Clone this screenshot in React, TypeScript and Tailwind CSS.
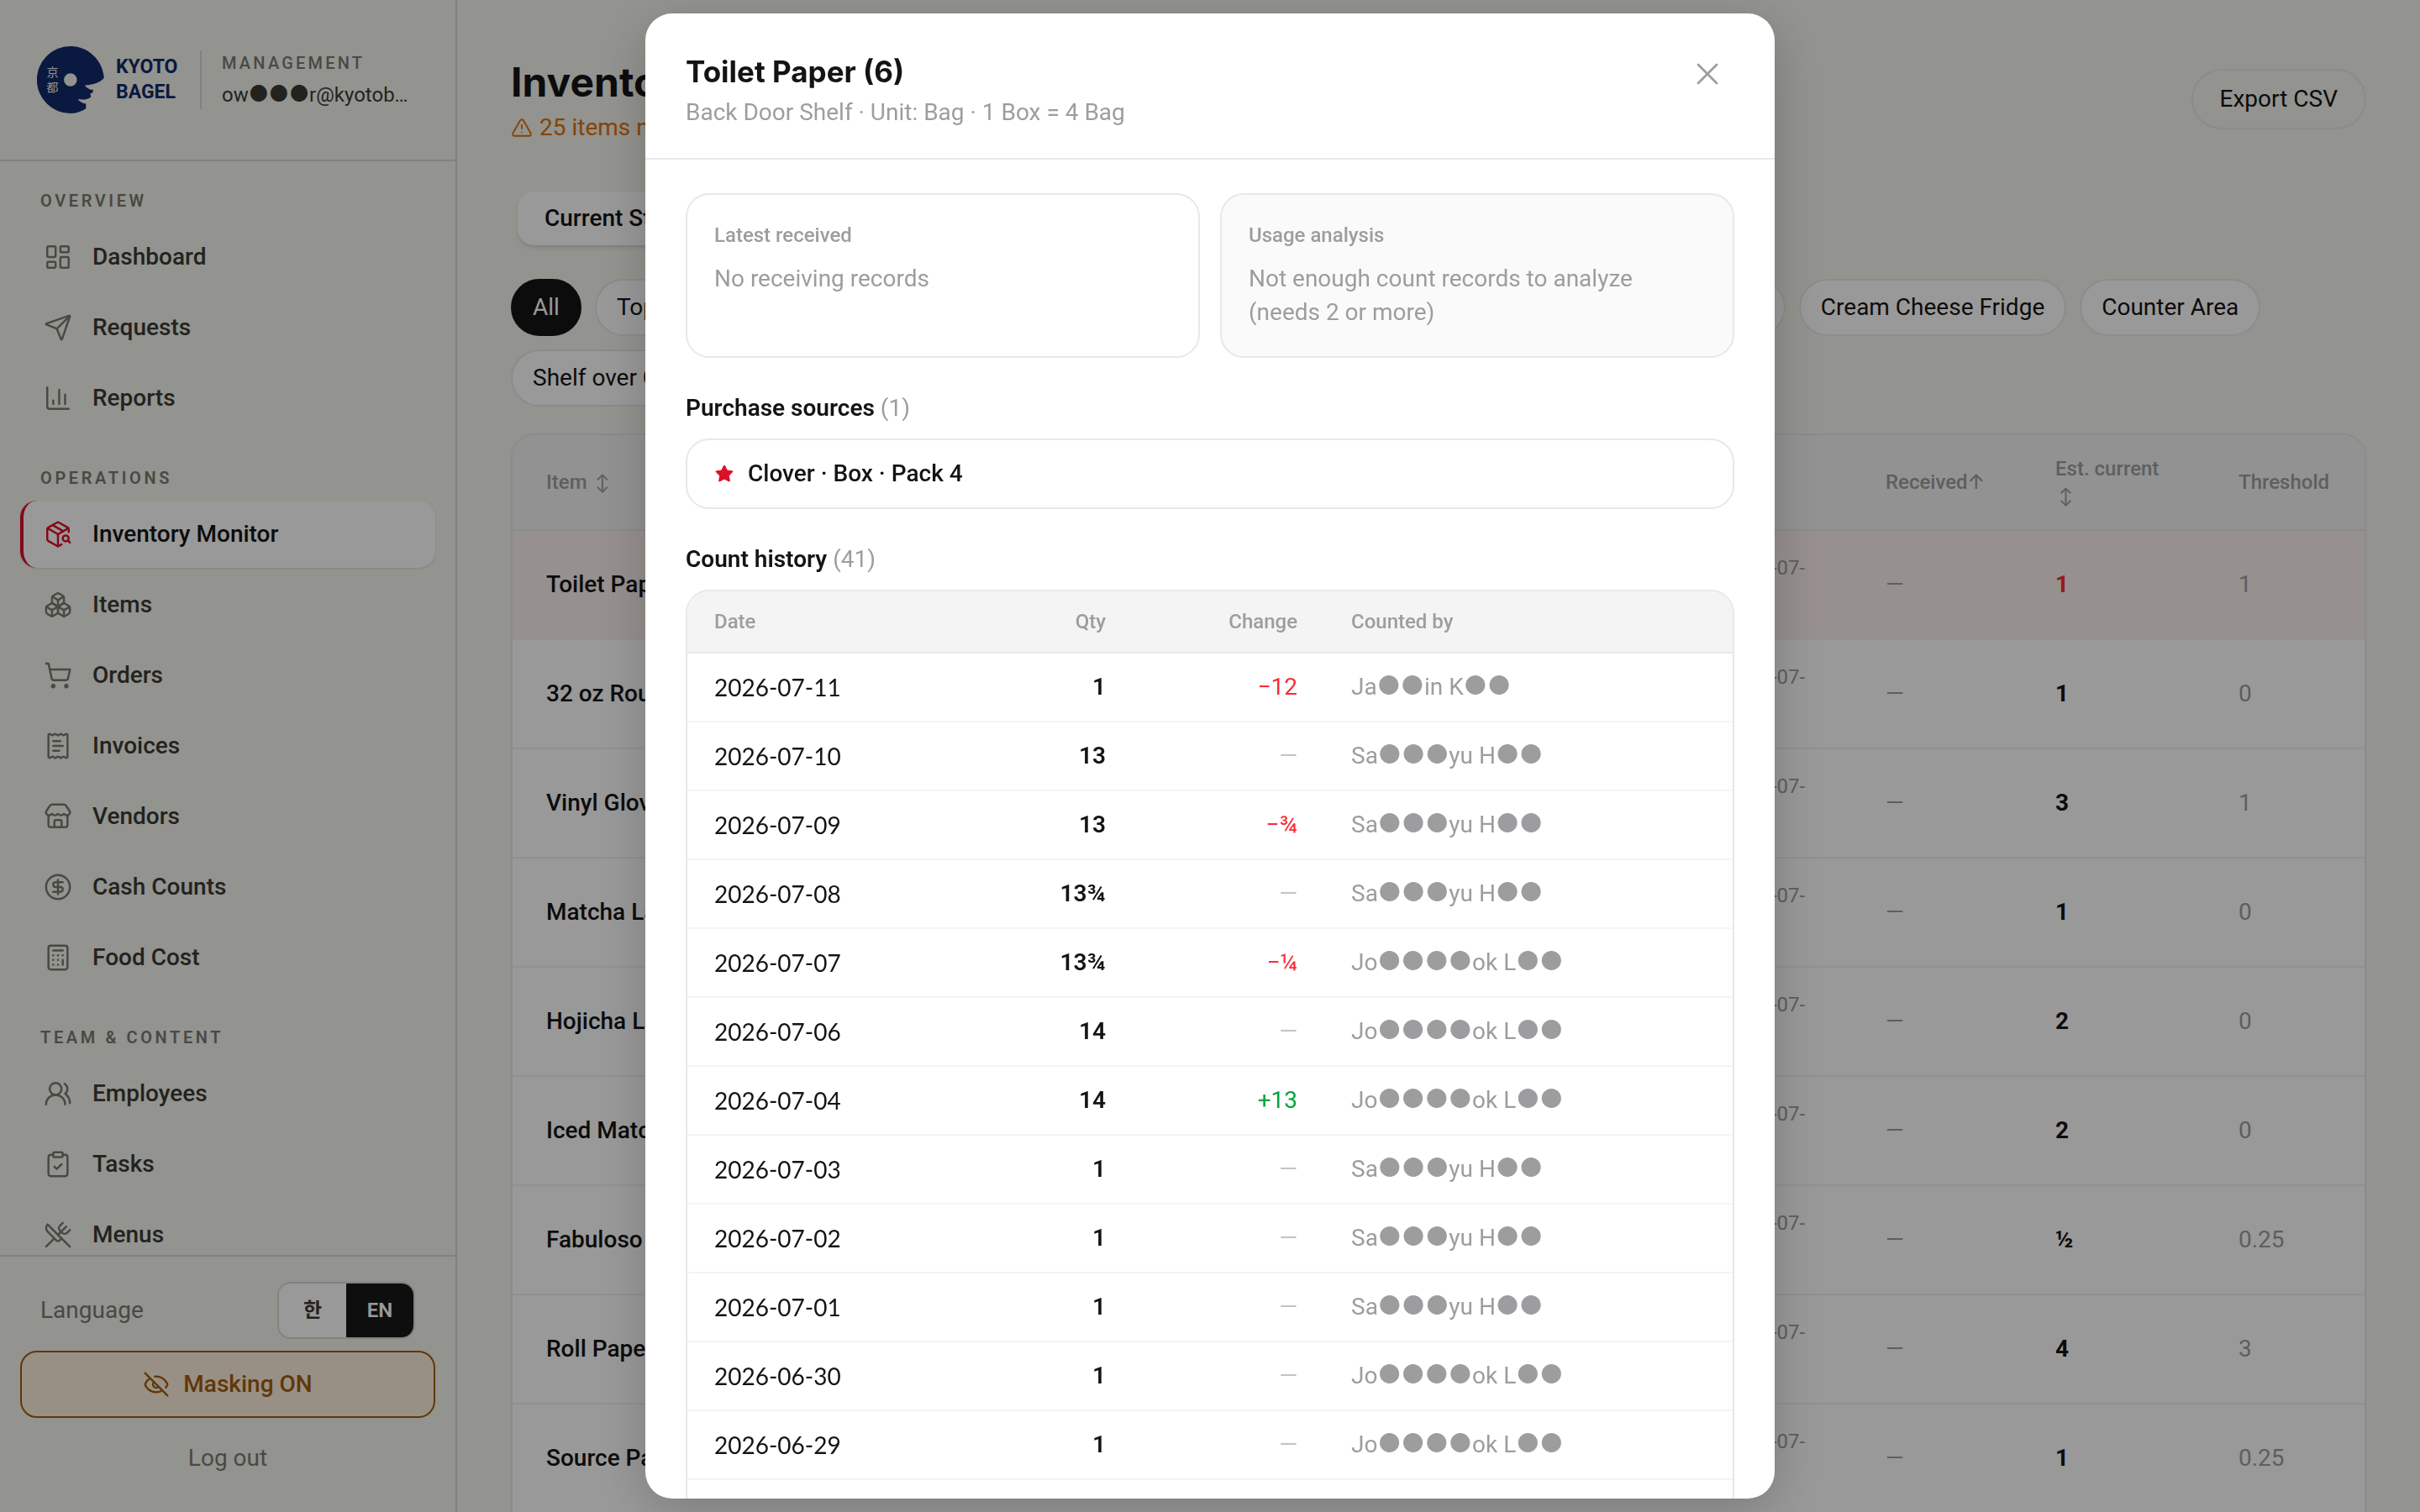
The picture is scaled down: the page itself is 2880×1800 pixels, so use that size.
import { Fragment } from 'react';
import type { LucideIcon } from 'lucide-react';
import {
  Boxes, Calculator, ChartColumn, CircleDollarSign, ClipboardCheck, EyeOff, LayoutDashboard,
  PackageSearch, ReceiptText, Send, ShoppingCart, Star, Store, TriangleAlert, UsersRound,
  UtensilsCrossed, X,
} from 'lucide-react';

type NavItem = { label: string; icon: LucideIcon; active?: boolean };

const navGroups: { title: string; items: NavItem[] }[] = [
  {
    title: 'Overview',
    items: [
      { label: 'Dashboard', icon: LayoutDashboard },
      { label: 'Requests', icon: Send },
      { label: 'Reports', icon: ChartColumn },
    ],
  },
  {
    title: 'Operations',
    items: [
      { label: 'Inventory Monitor', icon: PackageSearch, active: true },
      { label: 'Items', icon: Boxes },
      { label: 'Orders', icon: ShoppingCart },
      { label: 'Invoices', icon: ReceiptText },
      { label: 'Vendors', icon: Store },
      { label: 'Cash Counts', icon: CircleDollarSign },
      { label: 'Food Cost', icon: Calculator },
    ],
  },
  {
    title: 'Team & Content',
    items: [
      { label: 'Employees', icon: UsersRound },
      { label: 'Tasks', icon: ClipboardCheck },
      { label: 'Menus', icon: UtensilsCrossed },
    ],
  },
];

const locations = [
  'All', 'Top Freezer', 'Bottom Freezer', 'Back Door Shelf', 'Coffee Bar', 'Prep Fridge',
  'Dry Storage Shelf', 'Cream Cheese Fridge', 'Counter Area', 'Shelf over Counter',
];

const stock = [
  { item: 'Toilet Paper (6)', unit: 'Bag', est: '1', threshold: '1', low: true },
  { item: '32 oz Round Container', unit: 'Box', est: '1', threshold: '0' },
  { item: 'Vinyl Gloves', unit: 'Box', est: '3', threshold: '1' },
  { item: 'Matcha Latte Mix', unit: 'Bag', est: '1', threshold: '0' },
  { item: 'Hojicha Latte Mix', unit: 'Bag', est: '2', threshold: '0' },
  { item: 'Iced Matcha Cups', unit: 'Box', est: '2', threshold: '0' },
  { item: 'Fabuloso', unit: 'Bottle', est: '½', threshold: '0.25' },
  { item: 'Roll Paper Towel', unit: 'Roll', est: '4', threshold: '3' },
  { item: 'Source Packets', unit: 'Box', est: '1', threshold: '0.25' },
  { item: 'Napkins', unit: 'Box', est: '2', threshold: '1' },
];

const history = [
  ['2026-07-11', '1', '−12', 'Ja●●in K●●'],
  ['2026-07-10', '13', '—', 'Sa●●●yu H●●'],
  ['2026-07-09', '13', '−¾', 'Sa●●●yu H●●'],
  ['2026-07-08', '13¾', '—', 'Sa●●●yu H●●'],
  ['2026-07-07', '13¾', '−¼', 'Jo●●●●ok L●●'],
  ['2026-07-06', '14', '—', 'Jo●●●●ok L●●'],
  ['2026-07-04', '14', '+13', 'Jo●●●●ok L●●'],
  ['2026-07-03', '1', '—', 'Sa●●●yu H●●'],
  ['2026-07-02', '1', '—', 'Sa●●●yu H●●'],
  ['2026-07-01', '1', '—', 'Sa●●●yu H●●'],
  ['2026-06-30', '1', '—', 'Jo●●●●ok L●●'],
  ['2026-06-29', '1', '—', 'Jo●●●●ok L●●'],
  ['2026-06-28', '1', '—', 'Jo●●●●ok L●●'],
];

function changeColor(change: string) {
  if (change.startsWith('−')) return 'text-[#fb2c36]';
  if (change.startsWith('+')) return 'text-[#00a63e]';
  return 'text-[#c4c4c6]';
}

// Masked letters use Inter's round bullet, which is smaller than the CJK one
function Masked({ text }: { text: string }) {
  return (
    <>
      {text.split(/(●+)/).map((part, i) =>
        part.startsWith('●')
          ? <span key={i} className="font-['Inter',sans-serif] text-[1.1em] leading-none">{part}</span>
          : <Fragment key={i}>{part}</Fragment>
      )}
    </>
  );
}

function Logo() {
  return (
    <div className="flex shrink-0 items-center gap-3.5 text-[#112a6c]">
      <svg viewBox="14 19 237 238" className="h-20 w-20" aria-hidden="true">
        <path
          fill="currentColor"
          fillRule="evenodd"
          d="M132 19C196 19 247 70 251 131C240 146 210 156 183 157C190 168 200 173 213 174L210 184L202 186L205 198C195 208 175 210 158 206C165 217 176 222 187 223L187 240C170 252 150 257 132 257A119 119 0 0 1 132 19ZM132 115A23 23 0 1 0 132 161A23 23 0 1 0 132 115Z"
        />
        <g fill="#f3f4ec" fontFamily="'Noto Sans CJK JP', sans-serif" fontSize="42" textAnchor="middle">
          <text x="69" y="127">京</text>
          <text x="68" y="181">都</text>
        </g>
      </svg>
      <div className="w-[72px] text-[23px] leading-[30px] font-bold">
        KYOTO<br />BAGEL
      </div>
    </div>
  );
}

function Sidebar() {
  return (
    <aside className="flex w-[544px] shrink-0 flex-col border-r-2 border-[#d8d9d1]">
      <div className="flex h-[192px] shrink-0 items-center border-b-2 border-[#d8d9d1] pr-8 pl-11">
        <Logo />
        <div className="mr-6 ml-7 h-[70px] w-0.5 shrink-0 bg-[#d8d9d1]" />
        <div className="min-w-0">
          <p className="text-[20px] leading-[36px] font-medium tracking-[0.16em] text-[#7a7b72] uppercase">Management</p>
          <p className="text-[24px] leading-[40px] whitespace-nowrap text-[#3a3b34]">
            <Masked text="ow●●●r@kyotob…" />
          </p>
        </div>
      </div>

      <nav className="flex min-h-0 flex-1 flex-col gap-10 overflow-hidden px-6 pt-8">
        {navGroups.map((group) => (
          <div key={group.title}>
            <h2 className="mb-3 px-6 text-[20px] leading-[30px] font-semibold tracking-[0.18em] text-[#7a7b72] uppercase">{group.title}</h2>
            <div className="flex flex-col gap-1">
              {group.items.map(({ label, icon: Icon, active }) => (
                <a
                  key={label}
                  href="#"
                  className={`flex h-20 items-center gap-6 rounded-[20px] border-l-4 px-6 text-[28px] font-medium ${
                    active ? 'border-[#dc1028] bg-white text-[#141414] shadow-sm' : 'border-transparent text-[#3a3b34]'
                  }`}
                >
                  <Icon size={34} strokeWidth={1.75} className={active ? 'text-[#dc1028]' : 'text-[#7a7b72]'} />
                  {label}
                </a>
              ))}
            </div>
          </div>
        ))}
      </nav>

      <div className="border-t-2 border-[#d8d9d1] px-6 pt-[30px] pb-6">
        <div className="flex items-center justify-between px-6">
          <span className="text-[28px] text-[#7a7b72]">Language</span>
          <div className="flex overflow-hidden rounded-2xl border-2 border-[#d8d9d1] text-[24px] font-semibold">
            <button className="h-16 w-20 bg-white text-[#3a3b34]">한</button>
            <button className="h-16 w-20 bg-[#18181a] text-white">EN</button>
          </div>
        </div>
        <button className="mt-3.5 flex h-20 w-full items-center justify-center gap-4 rounded-[20px] border-2 border-[#a15c0e] bg-[#fef1dc] text-[28px] font-medium text-[#a15c0e]">
          <EyeOff size={32} strokeWidth={1.75} />
          Masking ON
        </button>
        <button className="mt-2 h-20 w-full text-[28px] text-[#7a7b72]">Log out</button>
      </div>
    </aside>
  );
}

function SortIcon() {
  return <span className="ml-1 font-['Inter',sans-serif] text-[20px] leading-none">↕</span>;
}

function StockTable() {
  return (
    <div className="mt-8 overflow-hidden rounded-[28px] border-2 border-[#e8e8ea] bg-white">
      <table className="w-full table-fixed text-left">
        <colgroup>
          <col />
          <col className="w-[300px]" />
          <col className="w-[190px]" />
          <col className="w-[202px]" />
          <col className="w-[218px]" />
          <col className="w-[190px]" />
        </colgroup>
        <thead>
          <tr className="border-b-2 border-[#e8e8ea] bg-[#f4f4f5] text-[24px] leading-[32px] text-[#9d9d9f]">
            <th className="px-10 py-6 font-medium">Item <SortIcon /></th>
            <th className="px-10 py-6 font-medium">Unit</th>
            <th className="px-10 py-6 font-medium">Date</th>
            <th className="px-10 py-6 font-medium whitespace-nowrap">Received<span className="font-['Inter',sans-serif] leading-none">↑</span></th>
            <th className="px-10 py-6 font-medium">Est. current <SortIcon /></th>
            <th className="px-10 py-6 font-medium">Threshold</th>
          </tr>
        </thead>
        <tbody className="text-[28px] leading-[40px]">
          {stock.map((row) => (
            <tr key={row.item} className={`border-b-2 border-[#f2f2f3] ${row.low ? 'bg-[#fbf0ef]' : ''}`}>
              <td className="px-10 py-6 font-medium whitespace-nowrap text-[#141414]">{row.item}</td>
              <td className="px-10 py-6 text-[#9d9d9f]">{row.unit}</td>
              <td className="px-10 py-6 text-[24px] text-[#9d9d9f]">2026-07-<br />11</td>
              <td className="px-10 py-6 text-[#9d9d9f]">—</td>
              <td className={`px-10 py-6 font-bold ${row.low ? 'text-[#fb2c36]' : 'text-[#141414]'}`}>{row.est}</td>
              <td className="px-10 py-6 text-[#9d9d9f]">{row.threshold}</td>
            </tr>
          ))}
        </tbody>
      </table>
    </div>
  );
}

function Inventory() {
  return (
    <main className="min-w-0 flex-1 overflow-hidden px-16 pt-16">
      <header className="flex items-center justify-between">
        <div>
          <h1 className="font-['Inter',sans-serif] text-[48px] leading-[68px] font-bold text-[#141414]">Inventory Monitor</h1>
          <p className="flex items-center gap-2 text-[28px] leading-[40px] text-[#e07000]">
            <TriangleAlert size={26} strokeWidth={1.75} />
            25 items need reordering
          </p>
        </div>
        <button className="h-[72px] rounded-full border-2 border-[#e8e8ea] px-8 text-[28px] text-[#141414]">Export CSV</button>
      </header>

      <div className="mt-12 inline-flex rounded-3xl p-2">
        <button className="h-16 rounded-[20px] bg-white px-8 text-[28px] font-medium text-[#141414] shadow-md">Current Stock</button>
        <button className="h-16 px-8 text-[28px] text-[#7a7b72]">History</button>
      </div>

      <div className="mt-8 flex flex-wrap gap-4">
        {locations.map((name, i) => (
          <button
            key={name}
            className={`h-[68px] rounded-full border-2 px-6 text-[28px] ${
              i === 0 ? 'border-[#141414] bg-[#141414] text-white' : 'border-[#e8e8ea] bg-white text-[#141414]'
            }`}
          >
            {name}
          </button>
        ))}
      </div>

      <StockTable />
    </main>
  );
}

function ItemDialog() {
  return (
    <div
      role="dialog"
      aria-modal="true"
      aria-labelledby="item-title"
      className="flex max-h-full w-full max-w-[1344px] flex-col overflow-hidden rounded-[32px] bg-white text-[28px] leading-[40px] shadow-[0_16px_64px_rgba(0,0,0,0.2)]"
    >
      <div className="flex shrink-0 items-start justify-between border-b-2 border-[#e8e8ea] px-12 pt-10 pb-[34px]">
        <div>
          <h2 id="item-title" className="font-['Inter',sans-serif] text-[35px] leading-[58px] font-bold text-[#141414]">Toilet Paper (6)</h2>
          <p className="text-[#9d9d9f]">Back Door Shelf · Unit: Bag · 1 Box = 4 Bag</p>
        </div>
        <button aria-label="Close" className="flex h-16 w-16 items-center justify-center text-[#9d9d9f]">
          <X size={44} strokeWidth={1.5} />
        </button>
      </div>

      <div className="min-h-0 overflow-hidden px-12 pt-10">
        <div className="grid grid-cols-2 gap-6 text-[#9d9d9f]">
          <section className="rounded-[28px] border-2 border-[#e8e8ea] p-8">
            <h3 className="text-[24px] leading-[32px] font-medium">Latest received</h3>
            <p className="mt-4">No receiving records</p>
          </section>
          <section className="rounded-[28px] border-2 border-[#e8e8ea] bg-[#fafafa] p-8">
            <h3 className="text-[24px] leading-[32px] font-medium">Usage analysis</h3>
            <p className="mt-4">Not enough count records to analyze (needs 2 or more)</p>
          </section>
        </div>

        <h3 className="mt-10 mb-4 font-semibold text-[#141414]">
          Purchase sources <span className="font-normal text-[#9d9d9f]">(1)</span>
        </h3>
        <div className="flex items-center gap-4 rounded-[28px] border-2 border-[#e8e8ea] px-8 py-5 font-medium text-[#141414]">
          <Star size={24} className="fill-[#dc1028] text-[#dc1028]" strokeWidth={1} />
          Clover · Box · Pack 4
        </div>

        <h3 className="mt-10 mb-4 font-semibold text-[#141414]">
          Count history <span className="font-normal text-[#9d9d9f]">(41)</span>
        </h3>
        <div className="overflow-hidden rounded-[28px] border-2 border-[#e8e8ea]">
          <table className="w-full table-fixed text-left">
            <colgroup>
              <col className="w-[300px]" />
              <col className="w-[230px]" />
              <col className="w-[228px]" />
              <col />
            </colgroup>
            <thead>
              <tr className="border-b-2 border-[#e8e8ea] bg-[#f4f4f5] text-[24px] text-[#9d9d9f]">
                <th className="px-8 py-4 font-medium">Date</th>
                <th className="px-8 py-4 text-right font-medium">Qty</th>
                <th className="px-8 py-4 text-right font-medium">Change</th>
                <th className="px-8 py-4 font-medium">Counted by</th>
              </tr>
            </thead>
            <tbody>
              {history.map(([date, qty, change, by]) => (
                <tr key={date} className="border-b-2 border-[#f4f4f5]">
                  <td className="px-8 py-5 font-['Lato',sans-serif] text-[#141414]">{date}</td>
                  <td className="px-8 py-5 text-right font-semibold text-[#141414]">{qty}</td>
                  <td className={`px-8 py-5 text-right ${changeColor(change)}`}>{change}</td>
                  <td className="px-8 py-5 text-[#9d9d9f]"><Masked text={by} /></td>
                </tr>
              ))}
            </tbody>
          </table>
        </div>
      </div>
    </div>
  );
}

export default function App() {
  return (
    <div className="flex h-screen overflow-hidden bg-[#f5f6ee] font-['Roboto','Noto_Sans_CJK_KR',sans-serif]">
      <Sidebar />
      <Inventory />
      <div className="fixed inset-0 flex items-center justify-center bg-black/40 p-4">
        <ItemDialog />
      </div>
    </div>
  );
}
